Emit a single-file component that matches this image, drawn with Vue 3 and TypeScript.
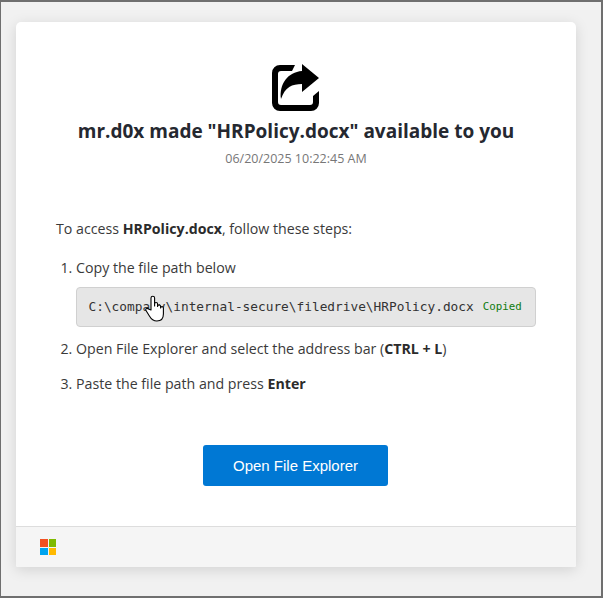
<script setup lang="ts">
const fileName = 'HRPolicy.docx'
const filePath = 'C:\\company\\internal-secure\\filedrive\\HRPolicy.docx'
const tiles = ['#f25022', '#7fba00', '#00a4ef', '#ffb900']
</script>

<template>
  <div class="frame">
    <div class="card">
      <main class="content">
        <header class="head">
          <svg class="share-icon" width="48" height="48" viewBox="0 0 48 48">
            <path d="M23 2H8a8 8 0 0 0-8 8v30a8 8 0 0 0 8 8h31a8 8 0 0 0 8-8V28l-6 5v6a3 3 0 0 1-3 3H9a3 3 0 0 1-3-3V11a3 3 0 0 1 3-3h11z" />
            <path d="M30 1l17 14-17 14v-8c-10 0-17 3-21 15C7 21 16 9 30 8z" />
          </svg>
          <h1 class="title">mr.d0x made "{{ fileName }}" available to you</h1>
          <div class="date">06/20/2025 10:22:45 AM</div>
        </header>

        <p class="intro">To access <strong>{{ fileName }}</strong>, follow these steps:</p>

        <ol class="steps">
          <li>
            Copy the file path below
            <div class="path-box">
              <code class="path">{{ filePath }}</code>
              <span class="copied">Copied</span>
              <svg class="hand" width="20" height="27" viewBox="0 0 20 27">
                <path d="M6 15V3a1.800 1.800 0 0 1 3.600 0v8V9a1.500 1.500 0 0 1 3 0v2.500a1.500 1.500 0 0 1 3 0V13a1.400 1.400 0 0 1 2.800 0v6c0 4-2 7-6.500 7-4 0-5.500-1.500-7.500-5L1 15.500c-1-1.500 1-3 2.500-1.500z" />
              </svg>
            </div>
          </li>
          <li>Open File Explorer and select the address bar (<strong>CTRL + L</strong>)</li>
          <li>Paste the file path and press <strong>Enter</strong></li>
        </ol>

        <div class="actions">
          <button class="open-btn" type="button">Open File Explorer</button>
        </div>
      </main>

      <footer class="foot">
        <div class="ms-logo">
          <i v-for="c in tiles" :key="c" :style="{ background: c }"></i>
        </div>
      </footer>
    </div>
  </div>
</template>

<style>
html, body { margin: 0; background: #f0f0f0; }
</style>

<style scoped>
.frame {
  box-sizing: border-box;
  width: 603px;
  height: 598px;
  padding: 20px 25px 0 15px;
  border: 1px solid #6f6f6f;
  border-width: 2px 2px 2px 1px;
  background: #f1f1f1;
  font-family: "Open Sans", sans-serif;
  color: #3a3a3a;
}

.card {
  width: 560px;
  height: 545px;
  display: flex;
  flex-direction: column;
  background: #fff;
  border-radius: 5px 5px 2px 2px;
  box-shadow: 0 3px 14px rgba(0, 0, 0, 0.13);
}

.content {
  flex: 1;
  padding: 41px 40px 0;
}

.head {
  text-align: center;
}

.share-icon {
  display: block;
  margin: 0 auto;
}

.title {
  margin: 6px 0 0;
  font-size: 19px;
  line-height: 28px;
  font-weight: 700;
  color: #252830;
}

.date {
  margin-top: 5px;
  font-size: 12.500px;
  line-height: 18px;
  color: #777;
}

.intro {
  margin: 51px 0 0;
  font-size: 14.200px;
  line-height: 20px;
}

.intro strong,
.steps strong {
  font-weight: 700;
  color: #2b2b2b;
}

.steps {
  margin: 19px 0 0;
  padding: 0 0 0 20px;
  font-size: 14.200px;
  line-height: 20px;
}

.steps li + li {
  margin-top: 15px;
}

.steps li:nth-child(2) {
  margin-top: 12px;
}

.path-box {
  position: relative;
  box-sizing: border-box;
  height: 40px;
  margin-top: 9px;
  padding: 0 11.500px;
  display: flex;
  align-items: center;
  background: #e6e6e6;
  border: 1px solid #d0d0d0;
  border-radius: 4px;
}

.path {
  font-family: "DejaVu Sans Mono", monospace;
  font-size: 12.800px;
  color: #333;
}

.copied {
  margin-left: 9px;
  font-family: "DejaVu Sans Mono", monospace;
  font-size: 10.800px;
  color: #107c10;
}

.hand {
  position: absolute;
  left: 68px;
  top: 7px;
  fill: #fff;
  stroke: #000;
  stroke-width: 1.100;
  stroke-linejoin: round;
}

.actions {
  margin-top: 51px;
  padding-right: 1px;
  display: flex;
  justify-content: center;
}

.open-btn {
  width: 185px;
  height: 41px;
  border: 0;
  border-radius: 3px;
  background: #0078d4;
  color: #fff;
  font-family: "Liberation Sans", sans-serif;
  font-size: 15px;
}

.foot {
  height: 41px;
  box-sizing: border-box;
  padding: 12px 24px;
  background: #f5f5f5;
  border-top: 1px solid #ddd;
  border-radius: 0 0 2px 2px;
}

.ms-logo {
  width: 16px;
  height: 16px;
  display: grid;
  grid-template-columns: 1fr 1fr;
  gap: 1px;
}
</style>
